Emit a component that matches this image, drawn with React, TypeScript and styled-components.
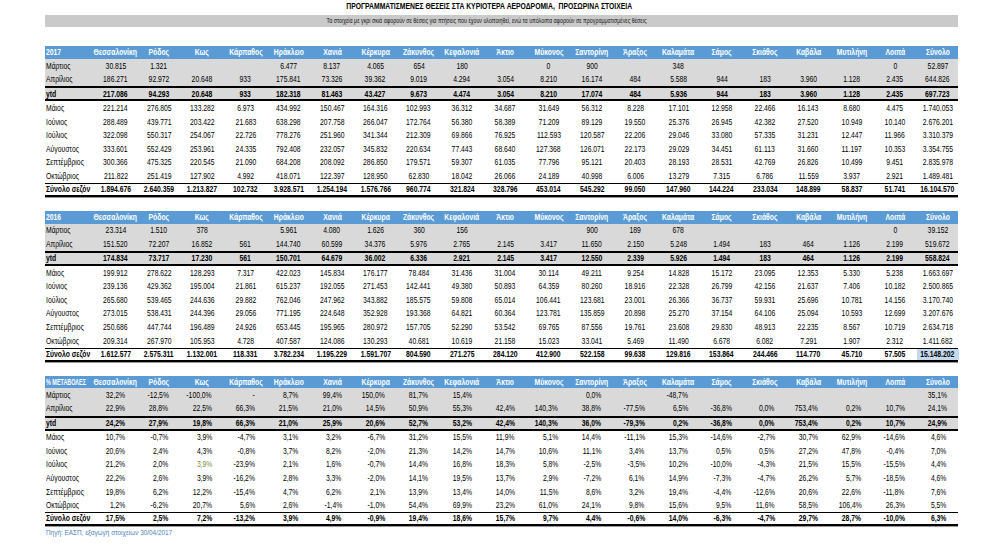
import React from 'react';
import styled, { createGlobalStyle } from 'styled-components';

const GlobalStyle = createGlobalStyle`
  html, body { margin: 0; padding: 0; background: #ffffff; }
  body { font-family: "Liberation Sans", Arial, sans-serif; color: #000; }
`;

const COLS = '49px repeat(19, 43.3px) 42px';

type Kind = 'head' | 'gray' | 'ytd' | 'month' | 'total';
type Align = 'left' | 'center' | 'right';

const Page = styled.div`
  width: 1000px;
  height: 550px;
  box-sizing: border-box;
  padding: 1px 0 0 45px;
  overflow: hidden;
`;

const Sheet = styled.div`
  width: 912.7px;
  display: flex;
  flex-direction: column;
`;

const Title = styled.div`
  height: 12px;
  padding-right: 24px;
  display: flex;
  justify-content: center;
  align-items: center;
  font-weight: 700;
  font-size: 9.2px;
  line-height: 1;
`;

const Note = styled.div`
  margin-top: 2px;
  height: 11.7px;
  padding-right: 30px;
  background: #cacaca;
  display: flex;
  justify-content: center;
  align-items: center;
  font-size: 7.6px;
  line-height: 1;
  color: #111;
`;

const Squeeze = styled.span<{ $origin: string; $k?: number }>`
  display: inline-block;
  white-space: nowrap;
  transform: scaleX(${p => p.$k ?? 0.8});
  transform-origin: ${p => p.$origin};
`;

const Table = styled.div<{ $first?: boolean }>`
  margin-top: ${p => (p.$first ? '19.8px' : '14px')};
  display: flex;
  flex-direction: column;
  font-size: 8.5px;
  line-height: 1;
`;

const heights: Record<Kind, string> = {
  head: '12.5px',
  gray: '13.75px',
  ytd: '15px',
  month: '13.6px',
  total: '14px',
};

const Row = styled.div<{ $kind: Kind }>`
  display: grid;
  grid-template-columns: ${COLS};
  box-sizing: border-box;
  height: ${p => heights[p.$kind]};
  background: ${p =>
    p.$kind === 'head' ? '#5b9bd5' : p.$kind === 'gray' || p.$kind === 'ytd' ? '#d9d9d9' : '#ffffff'};
  color: ${p => (p.$kind === 'head' ? '#ffffff' : '#000000')};
  font-weight: ${p => (p.$kind === 'head' || p.$kind === 'ytd' || p.$kind === 'total' ? 700 : 400)};
  border-top: ${p =>
    p.$kind === 'ytd' ? '2px solid #000' : p.$kind === 'total' ? '1px solid #000' : 'none'};
  border-bottom: ${p =>
    p.$kind === 'ytd' ? '2.5px solid #000' : p.$kind === 'total' ? '2px solid #000' : 'none'};
  box-shadow: ${p => (p.$kind === 'total' ? '0 1px 0 #9a9a9a' : 'none')};
`;

const Cell = styled.div<{ $align: Align; $hl?: boolean; $green?: boolean }>`
  display: flex;
  align-items: center;
  min-width: 0;
  justify-content: ${p =>
    p.$align === 'left' ? 'flex-start' : p.$align === 'right' ? 'flex-end' : 'center'};
  padding: ${p =>
    p.$align === 'left' ? '0 0 0 1px' : p.$align === 'right' ? '0 12px 0 0' : '0'};
  background: ${p => (p.$hl ? '#c4d9ef' : 'transparent')};
  color: ${p => (p.$green ? '#6f9132' : 'inherit')};
`;

const Source = styled.div`
  margin-top: 3px;
  padding-left: 1px;
  font-size: 8px;
  line-height: 1;
  color: #4a7fc1;
`;

const HEAD = 'Θεσσαλονίκη Ρόδος Κως Κάρπαθος Ηράκλειο Χανιά Κέρκυρα Ζάκυνθος Κεφαλονιά Άκτιο Μύκονος Σαντορίνη Άραξος Καλαμάτα Σάμος Σκιάθος Καβάλα Μυτιλήνη Λοιπά Σύνολο'.split(' ');

const parse = (s: string) => s.trim().split(/\s+/).map(v => (v === '_' ? '' : v));

interface RowData {
  label: string;
  kind: Kind;
  values: string[];
}

interface TableData {
  corner: string;
  align: Align;
  rows: RowData[];
}

const LABELS: [string, Kind][] = [
  ['Μάρτιος', 'gray'],
  ['Απρίλιος', 'gray'],
  ['ytd', 'ytd'],
  ['Μάιος', 'month'],
  ['Ιούνιος', 'month'],
  ['Ιούλιος', 'month'],
  ['Αύγουστος', 'month'],
  ['Σεπτέμβριος', 'month'],
  ['Οκτώβριος', 'month'],
  ['Σύνολο σεζόν', 'total'],
];

const build = (corner: string, align: Align, lines: string[]): TableData => ({
  corner,
  align,
  rows: LABELS.map(([label, kind], i) => ({ label, kind, values: parse(lines[i]) })),
});

const TABLES: TableData[] = [
  build('2017', 'center', [
    '30.815 1.321 _ _ 6.477 8.137 4.065 654 180 _ 0 900 _ 348 _ _ _ _ 0 52.897',
    '186.271 92.972 20.648 933 175.841 73.326 39.362 9.019 4.294 3.054 8.210 16.174 484 5.588 944 183 3.960 1.128 2.435 644.826',
    '217.086 94.293 20.648 933 182.318 81.463 43.427 9.673 4.474 3.054 8.210 17.074 484 5.936 944 183 3.960 1.128 2.435 697.723',
    '221.214 276.805 133.282 6.973 434.992 150.467 164.316 102.993 36.312 34.687 31.649 56.312 8.228 17.101 12.958 22.466 16.143 8.680 4.475 1.740.053',
    '288.489 439.771 203.422 21.683 638.298 207.758 266.047 172.764 56.380 58.389 71.209 89.129 19.550 25.376 26.945 42.382 27.520 10.949 10.140 2.676.201',
    '322.098 550.317 254.067 22.726 778.276 251.960 341.344 212.309 69.866 76.925 112.593 120.587 22.206 29.046 33.080 57.335 31.231 12.447 11.966 3.310.379',
    '333.601 552.429 253.961 24.335 792.408 232.057 345.832 220.634 77.443 68.640 127.368 126.071 22.173 29.029 34.451 61.113 31.660 11.197 10.353 3.354.755',
    '300.366 475.325 220.545 21.090 684.208 208.092 286.850 179.571 59.307 61.035 77.796 95.121 20.403 28.193 28.531 42.769 26.826 10.499 9.451 2.835.978',
    '211.822 251.419 127.902 4.992 418.071 122.397 128.950 62.830 18.042 26.066 24.189 40.998 6.006 13.279 7.315 6.786 11.559 3.937 2.921 1.489.481',
    '1.894.676 2.640.359 1.213.827 102.732 3.928.571 1.254.194 1.576.766 960.774 321.824 328.796 453.014 545.292 99.050 147.960 144.224 233.034 148.899 58.837 51.741 16.104.570',
  ]),
  build('2016', 'center', [
    '23.314 1.510 378 _ 5.961 4.080 1.626 360 156 _ _ 900 189 678 _ _ _ _ 0 39.152',
    '151.520 72.207 16.852 561 144.740 60.599 34.376 5.976 2.765 2.145 3.417 11.650 2.150 5.248 1.494 183 464 1.126 2.199 519.672',
    '174.834 73.717 17.230 561 150.701 64.679 36.002 6.336 2.921 2.145 3.417 12.550 2.339 5.926 1.494 183 464 1.126 2.199 558.824',
    '199.912 278.622 128.293 7.317 422.023 145.834 176.177 78.484 31.436 31.004 30.114 49.211 9.254 14.828 15.172 23.095 12.353 5.330 5.238 1.663.697',
    '239.136 429.362 195.004 21.861 615.237 192.055 271.453 142.441 49.380 50.893 64.359 80.260 18.916 22.328 26.799 42.156 21.637 7.406 10.182 2.500.865',
    '265.680 539.465 244.636 29.882 762.046 247.962 343.882 185.575 59.808 65.014 106.441 123.681 23.001 26.366 36.737 59.931 25.696 10.781 14.156 3.170.740',
    '273.015 538.431 244.396 29.056 771.195 224.648 352.928 193.368 64.821 60.364 123.781 135.859 20.898 25.270 37.154 64.106 25.094 10.593 12.699 3.207.676',
    '250.686 447.744 196.489 24.926 653.445 195.965 280.972 157.705 52.290 53.542 69.765 87.556 19.761 23.608 29.830 48.913 22.235 8.567 10.719 2.634.718',
    '209.314 267.970 105.953 4.728 407.587 124.086 130.293 40.681 10.619 21.158 15.023 33.041 5.469 11.490 6.678 6.082 7.291 1.907 2.312 1.411.682',
    '1.612.577 2.575.311 1.132.001 118.331 3.782.234 1.195.229 1.591.707 804.590 271.275 284.120 412.900 522.158 99.638 129.816 153.864 244.466 114.770 45.710 57.505 15.148.202*h',
  ]),
  build('% ΜΕΤΑΒΟΛΕΣ', 'right', [
    '32,2% -12,5% -100,0% - 8,7% 99,4% 150,0% 81,7% 15,4% _ _ 0,0% _ -48,7% _ _ _ _ _ 35,1%',
    '22,9% 28,8% 22,5% 66,3% 21,5% 21,0% 14,5% 50,9% 55,3% 42,4% 140,3% 38,8% -77,5% 6,5% -36,8% 0,0% 753,4% 0,2% 10,7% 24,1%',
    '24,2% 27,9% 19,8% 66,3% 21,0% 25,9% 20,6% 52,7% 53,2% 42,4% 140,3% 36,0% -79,3% 0,2% -36,8% 0,0% 753,4% 0,2% 10,7% 24,9%',
    '10,7% -0,7% 3,9% -4,7% 3,1% 3,2% -6,7% 31,2% 15,5% 11,9% 5,1% 14,4% -11,1% 15,3% -14,6% -2,7% 30,7% 62,9% -14,6% 4,6%',
    '20,6% 2,4% 4,3% -0,8% 3,7% 8,2% -2,0% 21,3% 14,2% 14,7% 10,6% 11,1% 3,4% 13,7% 0,5% 0,5% 27,2% 47,8% -0,4% 7,0%',
    '21,2% 2,0% 3,9%*g -23,9% 2,1% 1,6% -0,7% 14,4% 16,8% 18,3% 5,8% -2,5% -3,5% 10,2% -10,0% -4,3% 21,5% 15,5% -15,5% 4,4%',
    '22,2% 2,6% 3,9% -16,2% 2,8% 3,3% -2,0% 14,1% 19,5% 13,7% 2,9% -7,2% 6,1% 14,9% -7,3% -4,7% 26,2% 5,7% -18,5% 4,6%',
    '19,8% 6,2% 12,2% -15,4% 4,7% 6,2% 2,1% 13,9% 13,4% 14,0% 11,5% 8,6% 3,2% 19,4% -4,4% -12,6% 20,6% 22,6% -11,8% 7,6%',
    '1,2% -6,2% 20,7% 5,6% 2,6% -1,4% -1,0% 54,4% 69,9% 23,2% 61,0% 24,1% 9,8% 15,6% 9,5% 11,6% 58,5% 106,4% 26,3% 5,5%',
    '17,5% 2,5% 7,2% -13,2% 3,9% 4,9% -0,9% 19,4% 18,6% 15,7% 9,7% 4,4% -0,6% 14,0% -6,3% -4,7% 29,7% 28,7% -10,0% 6,3%',
  ]),
];

const originFor = (a: Align) => (a === 'left' ? 'left center' : a === 'right' ? 'right center' : 'center');

const Text: React.FC<{ align: Align; k?: number; children: React.ReactNode }> = ({ align, k, children }) => (
  <Squeeze $origin={originFor(align)} $k={k}>
    {children}
  </Squeeze>
);

const DataCell: React.FC<{ raw: string; align: Align }> = ({ raw, align }) => {
  const hl = raw.endsWith('*h');
  const green = raw.endsWith('*g');
  const value = hl || green ? raw.slice(0, -2) : raw;
  return (
    <Cell $align={align} $hl={hl} $green={green}>
      {value && <Text align={align}>{value}</Text>}
    </Cell>
  );
};

const SheetTable: React.FC<{ data: TableData; first?: boolean }> = ({ data, first }) => (
  <Table $first={first}>
    <Row $kind="head">
      <Cell $align="left">
        <Text align="left" k={data.corner.length > 6 ? 0.64 : 0.8}>
          {data.corner}
        </Text>
      </Cell>
      {HEAD.map(h => (
        <Cell key={h} $align="center">
          <Text align="center">{h}</Text>
        </Cell>
      ))}
    </Row>
    {data.rows.map(r => (
      <Row key={r.label} $kind={r.kind}>
        <Cell $align="left">
          <Text align="left">{r.label}</Text>
        </Cell>
        {r.values.map((v, i) => (
          <DataCell key={i} raw={v} align={data.align} />
        ))}
      </Row>
    ))}
  </Table>
);

export default function App() {
  return (
    <Page>
      <GlobalStyle />
      <Sheet>
        <Title>
          <Squeeze $origin="center" $k={0.74}>
            ΠΡΟΓΡΑΜΜΑΤΙΣΜΕΝΕΣ ΘΕΣΕΙΣ ΣΤΑ ΚΥΡΙΟΤΕΡΑ ΑΕΡΟΔΡΟΜΙΑ,&nbsp; ΠΡΟΣΩΡΙΝΑ ΣΤΟΙΧΕΙΑ
          </Squeeze>
        </Title>
        <Note>
          <Squeeze $origin="center" $k={0.7}>
            Τα στοιχεία με γκρι σκιά αφορούν σε θέσεις για πτήσεις που έχουν υλοποιηθεί, ενώ τα υπόλοιπα αφορούν σε προγραμματισμένες θέσεις
          </Squeeze>
        </Note>
        {TABLES.map((t, i) => (
          <SheetTable key={t.corner} data={t} first={i === 0} />
        ))}
        <Source>
          <Squeeze $origin="left center">Πηγή: ΕΑΣΠ, εξαγωγή στοιχείων 30/04/2017</Squeeze>
        </Source>
      </Sheet>
    </Page>
  );
}
